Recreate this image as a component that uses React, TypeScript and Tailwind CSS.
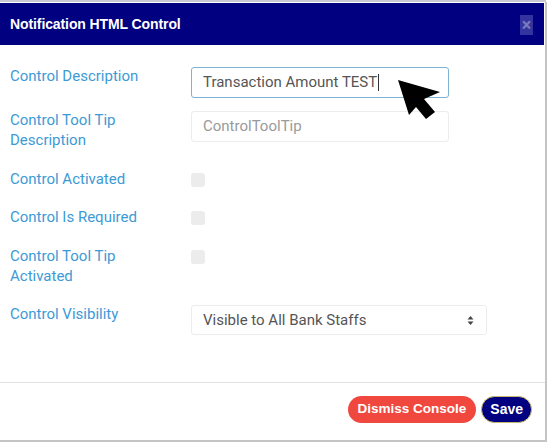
import React from "react";

const Label = ({ children }: { children: React.ReactNode }) => (
  <div className="w-[191px] shrink-0 pl-[10px] text-[15px] leading-[20px] text-[#3d9ad6]">
    {children}
  </div>
);

const Check = () => (
  <div className="mt-[4px] h-[14px] w-[14px] rounded-[3px] bg-[#ececec]" />
);

export default function App() {
  return (
    <div className="h-[442px] w-[548px] bg-white font-['Roboto',sans-serif]">
      <div className="h-[2px] w-[546px] bg-[#c9c9d6]" />
      <div className="h-[440px] w-[547px] border-r-[2px] border-b-[2px] border-r-[#c4c4c4] border-b-[#c4c4c4] pt-px">
        <div className="flex h-[42px] w-[544px] items-center justify-between bg-[#000080] pl-[10px] pr-[11px]">
          <span className="font-['Liberation_Sans',sans-serif] text-[14px] font-bold tracking-[-0.1px] text-white">
            Notification HTML Control
          </span>
          <div className="mt-[2px] flex h-[20px] w-[13px] items-center justify-center bg-[#3434a0] text-[18px] font-bold leading-none text-[#7a7ab8]">
            ×
          </div>
        </div>
        <div className="relative flex flex-col pt-[21px]">
          <div className="flex h-[44px]">
            <Label>Control Description</Label>
            <div className="mt-px flex h-[31px] w-[258px] items-center rounded-[3px] border border-[#7fb3d5] px-[11px] text-[15px] text-[#555]">
              Transaction Amount TEST<span className="ml-px h-[17px] w-px bg-[#333]" />
            </div>
          </div>
          <div className="flex h-[59px]">
            <Label>Control Tool Tip<br />Description</Label>
            <div className="mt-px flex h-[31px] w-[258px] items-center rounded-[3px] border border-[#ececec] px-[11px] text-[15px] text-[#9a9a9a]">
              ControlToolTip
            </div>
          </div>
          <div className="flex h-[38px]">
            <Label>Control Activated</Label>
            <Check />
          </div>
          <div className="flex h-[39px]">
            <Label>Control Is Required</Label>
            <Check />
          </div>
          <div className="flex h-[58px]">
            <Label>Control Tool Tip<br />Activated</Label>
            <Check />
          </div>
          <div className="flex h-[48px]">
            <Label>Control Visibility</Label>
            <div className="mt-px flex h-[30px] w-[296px] items-center justify-between rounded-[3px] border border-[#ececec] pl-[11px] pr-[12px] text-[15px] text-[#555]">
              <span>Visible to All Bank Staffs</span>
              <svg width="7" height="11" viewBox="0 0 7 11">
                <path d="M0.5 4.5 L3.5 1 L6.5 4.5 Z" fill="#444" />
                <path d="M0.5 6.5 L3.5 10 L6.5 6.5 Z" fill="#444" />
              </svg>
            </div>
          </div>
          <svg className="absolute left-[396px] top-[33px]" width="46" height="44" viewBox="0 0 46 44">
            <path d="M2 2 L13 37 L20 29 L30 41 L39 34 L28 21 L44 14 Z" fill="#000" />
          </svg>
        </div>
        <div className="mt-[30px] h-px w-[545px] bg-[#e2e2e2]" />
        <div className="flex justify-end gap-[5px] pr-[13px] pt-[13px]">
          <button className="h-[27px] rounded-full bg-[#f0483e] px-[10px] font-['Liberation_Sans',sans-serif] text-[13.5px] font-bold text-white">
            Dismiss Console
          </button>
          <button className="h-[27px] rounded-full border border-[#c9b86a] bg-[#000080] px-[8px] font-['Liberation_Sans',sans-serif] text-[14px] font-bold text-white">
            Save
          </button>
        </div>
      </div>
    </div>
  );
}
